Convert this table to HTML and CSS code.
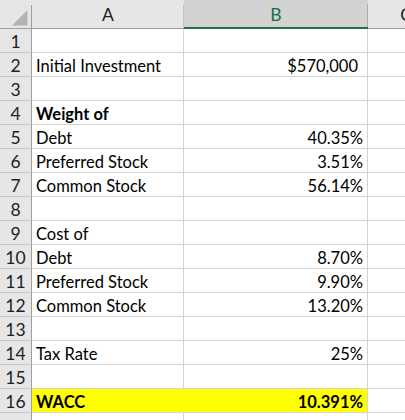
FILE: index.html
```html
<!DOCTYPE html>
<html>
<head>
<meta charset="utf-8">
<link rel="stylesheet" href="styles.css">
</head>
<body>
<div class="sheet">
  <div class="corner"><svg class="tri" width="16" height="16" viewBox="0 0 16 16"><polygon points="0,15.5 15.5,15.5 15.5,0" fill="#b3b3b3"/></svg></div>
  <div class="colhead">A</div>
  <div class="colhead sel">B</div>
  <div class="colhead">C</div>

  <div class="rh">1</div><div class="c"></div><div class="c"></div><div class="c"></div>
  <div class="rh">2</div><div class="c">Initial Investment</div><div class="c num cur">$570,000</div><div class="c"></div>
  <div class="rh">3</div><div class="c"></div><div class="c"></div><div class="c"></div>
  <div class="rh">4</div><div class="c b">Weight of</div><div class="c"></div><div class="c"></div>
  <div class="rh">5</div><div class="c">Debt</div><div class="c num">40.35%</div><div class="c"></div>
  <div class="rh">6</div><div class="c">Preferred Stock</div><div class="c num">3.51%</div><div class="c"></div>
  <div class="rh">7</div><div class="c">Common Stock</div><div class="c num">56.14%</div><div class="c"></div>
  <div class="rh">8</div><div class="c"></div><div class="c"></div><div class="c"></div>
  <div class="rh">9</div><div class="c">Cost of</div><div class="c"></div><div class="c"></div>
  <div class="rh">10</div><div class="c">Debt</div><div class="c num">8.70%</div><div class="c"></div>
  <div class="rh">11</div><div class="c">Preferred Stock</div><div class="c num">9.90%</div><div class="c"></div>
  <div class="rh">12</div><div class="c">Common Stock</div><div class="c num">13.20%</div><div class="c"></div>
  <div class="rh">13</div><div class="c"></div><div class="c"></div><div class="c"></div>
  <div class="rh">14</div><div class="c">Tax Rate</div><div class="c num">25%</div><div class="c"></div>
  <div class="rh">15</div><div class="c"></div><div class="c"></div><div class="c"></div>
  <div class="rh">16</div><div class="c b hl hl-a">WACC</div><div class="c num b hl">10.391%</div><div class="c"></div>
  <div class="rh"></div><div class="c"></div><div class="c"></div><div class="c"></div>
</div>
</body>
</html>
```

FILE: styles.css
```css
html, body {
  margin: 0;
  padding: 0;
  background: #ffffff;
  overflow: hidden;
}
.sheet {
  display: grid;
  grid-template-columns: 32px 152px 184px 76px;
  grid-template-rows: 29px;
  grid-auto-rows: 24px;
  width: 444px;
  font-family: "Lato", "Liberation Sans", sans-serif;
  font-size: 16.5px;
  color: #000;
}
.sheet > div {
  box-sizing: border-box;
}
.corner {
  background:
    linear-gradient(#9e9e9e, #9e9e9e) right bottom / 1px 23px no-repeat,
    #e6e6e6;
  border-bottom: 1px solid #9e9e9e;
  display: flex;
  align-items: flex-end;
  justify-content: flex-end;
  padding: 0 4px 2px 0;
}
.tri { display: block; }
.colhead {
  background:
    linear-gradient(#c3c3c3, #c3c3c3) right bottom / 1px 23px no-repeat,
    #e6e6e6;
  border-bottom: 1px solid #9e9e9e;
  display: flex;
  align-items: flex-end;
  justify-content: center;
  padding-bottom: 3px;
  line-height: 20px;
  font-size: 17.5px;
  color: #222;
}
.colhead.sel {
  background:
    linear-gradient(#ababab, #ababab) right bottom / 1px 23px no-repeat,
    #d2d2d2;
  border-bottom: 2px solid #217346;
  color: #1d6b40;
  padding-bottom: 2px;
}
.rh {
  background: #e6e6e6;
  border-right: 1px solid #9e9e9e;
  border-bottom: 1px solid #c8c8c8;
  text-align: center;
  line-height: 20px;
  padding-top: 3px;
  font-size: 17.5px;
  color: #222;
}
.c {
  border-right: 1px solid #d4d4d4;
  border-bottom: 1px solid #d4d4d4;
  padding: 3px 4px 0 4px;
  line-height: 20px;
  white-space: nowrap;
  overflow: hidden;
}
.num { text-align: right; }
.cur { padding-right: 9px; }
.b { font-weight: bold; }
.hl { background: #ffff00; }
.hl-a { border-right-color: #ffff00; }
```
